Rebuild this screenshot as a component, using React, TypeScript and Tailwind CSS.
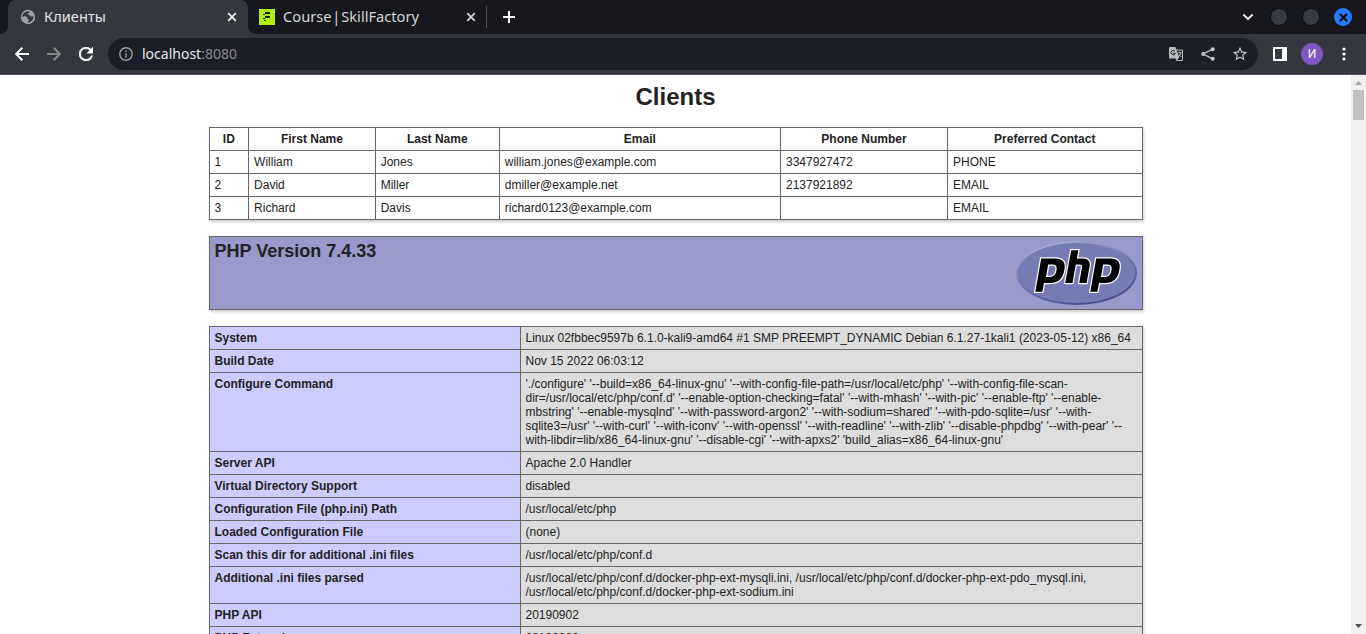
import React from "react";

const clients = [
  ["1", "William", "Jones", "william.jones@example.com", "3347927472", "PHONE"],
  ["2", "David", "Miller", "dmiller@example.net", "2137921892", "EMAIL"],
  ["3", "Richard", "Davis", "richard0123@example.com", "", "EMAIL"],
];

const columns = [
  { label: "ID", width: 39.6 },
  { label: "First Name", width: 126.6 },
  { label: "Last Name", width: 124.1 },
  { label: "Email", width: 281.2 },
  { label: "Phone Number", width: 167 },
  { label: "Preferred Contact", width: undefined },
];

const info = [
  ["System", "Linux 02fbbec9597b 6.1.0-kali9-amd64 #1 SMP PREEMPT_DYNAMIC Debian 6.1.27-1kali1 (2023-05-12) x86_64"],
  ["Build Date", "Nov 15 2022 06:03:12"],
  [
    "Configure Command",
    "'./configure' '--build=x86_64-linux-gnu' '--with-config-file-path=/usr/local/etc/php' '--with-config-file-scan-dir=/usr/local/etc/php/conf.d' '--enable-option-checking=fatal' '--with-mhash' '--with-pic' '--enable-ftp' '--enable-mbstring' '--enable-mysqlnd' '--with-password-argon2' '--with-sodium=shared' '--with-pdo-sqlite=/usr' '--with-sqlite3=/usr' '--with-curl' '--with-iconv' '--with-openssl' '--with-readline' '--with-zlib' '--disable-phpdbg' '--with-pear' '--with-libdir=lib/x86_64-linux-gnu' '--disable-cgi' '--with-apxs2' 'build_alias=x86_64-linux-gnu'",
  ],
  ["Server API", "Apache 2.0 Handler"],
  ["Virtual Directory Support", "disabled"],
  ["Configuration File (php.ini) Path", "/usr/local/etc/php"],
  ["Loaded Configuration File", "(none)"],
  ["Scan this dir for additional .ini files", "/usr/local/etc/php/conf.d"],
  [
    "Additional .ini files parsed",
    "/usr/local/etc/php/conf.d/docker-php-ext-mysqli.ini, /usr/local/etc/php/conf.d/docker-php-ext-pdo_mysql.ini, /usr/local/etc/php/conf.d/docker-php-ext-sodium.ini",
  ],
  ["PHP API", "20190902"],
  ["PHP Extension", "20190902"],
];

const cell = "border border-[#666] px-[5px] py-1 align-baseline text-xs leading-[14px]";
const tableBase = "w-[934px] border-collapse shadow-[1px_2px_3px_#ccc]";

function Cross({ className }: { className: string }) {
  return (
    <svg viewBox="0 0 10 10" className={className} fill="none" stroke="currentColor" strokeWidth="1.7">
      <path d="M1.2 1.2 8.8 8.8M8.8 1.2 1.2 8.8" />
    </svg>
  );
}

function TabStrip() {
  return (
    <div className="flex h-[34px] bg-[#16181d]">
      <div className="flex w-2 items-end bg-[#35373e]">
        <div className="h-[34px] w-2 rounded-br-lg bg-[#16181d]" />
      </div>
      <div className="flex w-60 items-center rounded-t-lg bg-[#35373e] pl-3 pr-[11px]">
        <svg viewBox="0 0 16 16" className="size-4 shrink-0">
          <circle cx="8" cy="8" r="7.2" fill="#9aa0a6" />
          <path
            d="M8 2.300c1 .2 1.600.6 1.500 1.300-.2.900-1.700.5-1.800 1.500-.1.800.9 1.100 1.800 1.100 1.200 0 1.200 1.500 2.200 1.600.8.100 1.400-.3 2.100-.2-.1 1.700-.9 3.200-2.100 4.300-1.100.9-2.300 1.500-3.700 1.500-.3-1 .8-1.400.9-2.200.1-1-1.200-.8-1.300-1.800-.1-.9-.8-1.300-1.800-1.300H2.300C2.200 5.200 4.600 2.500 8 2.300z"
            fill="#35373e"
          />
          <path d="M2.300 8.100c1.200-.2 1.700-1.300 2.900-1.100 1 .2.500 1.500 1.800 1.600v1.500H4.700l-1.900-.6z" fill="#9aa0a6" />
        </svg>
        <span className="ml-2 flex-1 pb-0.5 text-[14.67px] leading-5 text-[#e3e5e8]">Клиенты</span>
        <Cross className="size-2.5 text-[#f1f1f1]" />
      </div>
      <div className="w-2 bg-[#35373e]">
        <div className="h-[34px] w-2 rounded-bl-lg bg-[#16181d]" />
      </div>
      <div className="flex w-[231px] items-center border-r border-[#4b4d52] [border-image:linear-gradient(transparent_7px,#4b4d52_7px,#4b4d52_27px,transparent_27px)_1] pl-[3px] pr-[10px]">
        <svg viewBox="0 0 16 16" className="size-4 shrink-0" shapeRendering="crispEdges">
          <path fill="#b5ee13" d="M0 0h16v16H0z" />
          <path fill="#17230a" d="M6 3h5v2H6zM4 5h2v1H4zM6 7h5v2H6zM4 9h2v1H4zM5 11h2v1H5z" />
        </svg>
        <span className="ml-2 flex-1 whitespace-nowrap pb-0.5 text-[14.67px] leading-5 text-[#d5d6d8] [word-spacing:-3px]">Course | SkillFactory</span>
        <Cross className="size-2.5 text-[#d5d6d8]" />
      </div>
      <div className="flex flex-1 items-center pl-4">
        <svg viewBox="0 0 12 12" className="size-3" shapeRendering="crispEdges">
          <path d="M5 0h2v5h5v2H7v5H5V7H0V5h5z" fill="#fff" />
        </svg>
      </div>
      <div className="flex items-center pr-[14px]">
        <svg viewBox="0 0 12 8" className="h-2 w-3" fill="none" stroke="#fff" strokeWidth="1.8">
          <path d="M1.300 1.500 6 6l4.700-4.500" />
        </svg>
        <span className="ml-[17px] size-4 rounded-full bg-[#373943] shadow-[0_0_0_1px_#0e0f13]" />
        <span className="ml-4 size-4 rounded-full bg-[#373943] shadow-[0_0_0_1px_#0e0f13]" />
        <span className="ml-[15px] flex size-[18px] items-center justify-center rounded-full bg-[#267bff]">
          <svg viewBox="0 0 10 10" className="size-[9px]" stroke="#0e1420" strokeWidth="2.600">
            <path d="M1 1l8 8M9 1 1 9" />
          </svg>
        </span>
      </div>
    </div>
  );
}

function Toolbar() {
  return (
    <div className="flex h-[41px] items-center border-b border-[#55575c] bg-[#35373e] pl-[15px]">
      <svg viewBox="0 0 14 14" className="size-[14px]" fill="none" stroke="#fff" strokeWidth="2">
        <path d="M14 7H1.800M7.300.7 1.200 7l6.100 6.300" />
      </svg>
      <svg viewBox="0 0 14 14" className="ml-[18px] size-[14px]" fill="none" stroke="#84868a" strokeWidth="2">
        <path d="M0 7h12.200M6.700.7 12.800 7l-6.100 6.300" />
      </svg>
      <svg viewBox="4 4 16 16" className="ml-[18px] size-[14px]" fill="#fff" stroke="#fff" strokeWidth="0.500">
        <path d="M17.650 6.350A7.950 7.950 0 0 0 12 4a8 8 0 1 0 7.730 10h-2.080A6 6 0 1 1 12 6c1.660 0 3.140.69 4.220 1.780L13 11h7V4z" />
      </svg>
      <div className="ml-[15px] flex h-8 w-[1150px] items-center rounded-full bg-[#1b1e26] pl-[11px] pr-[10px]">
        <svg viewBox="0 0 14 14" className="size-[14px]">
          <circle cx="7" cy="7" r="6.200" fill="none" stroke="#9aa0a6" strokeWidth="1.400" />
          <path d="M6.300 6.200h1.500V10.500H6.300zM6.300 3.500h1.500V5H6.300z" fill="#9aa0a6" />
        </svg>
        <span className="ml-[9px] flex-1 text-[14px] leading-5 text-[#e8eaed]">
          localhost<span className="text-[#85878c]">:8080</span>
        </span>
        <svg viewBox="0 0 16 16" className="size-4">
          <path d="M2.500 1h5l.8 2.500H14a1 1 0 0 1 1 1V14a1 1 0 0 1-1 1H8.500l-.9-2.500H2a1 1 0 0 1-1-1V2a1 1 0 0 1 1-1z" fill="#b9babd" />
          <path d="M8.700 4.500H14v9.500H9.200l2-2.500z" fill="#1b1e26" />
          <path d="M9.700 6.700h4M11.700 5.500v1.200M13 7c-.4 1.700-1.400 2.700-2.600 3.700M10.700 8.300l2.600 2.700" stroke="#b9babd" fill="none" />
          <path d="M7 5.300a2.200 2.200 0 1 0 .3 2H5.200" stroke="#1b1e26" fill="none" />
        </svg>
        <svg viewBox="0 0 16 16" className="ml-4 size-4" fill="#c4c5c8">
          <path d="M12.700 3.200 3.200 8l9.500 4.800" fill="none" stroke="#c4c5c8" strokeWidth="1.300" />
          <circle cx="12.700" cy="3.200" r="2" />
          <circle cx="3.200" cy="8" r="2" />
          <circle cx="12.700" cy="12.800" r="2" />
        </svg>
        <svg viewBox="1 1 22 22" className="ml-4 size-4" fill="#c4c5c8">
          <path d="m22 9.240-7.190-.62L12 2 9.190 8.630 2 9.240l5.460 4.730L5.820 21 12 17.270 18.180 21l-1.630-7.030zM12 15.400l-3.760 2.270 1-4.280-3.320-2.880 4.380-.38L12 6.100l1.710 4.040 4.380.38-3.320 2.880 1 4.280z" />
        </svg>
      </div>
      <svg viewBox="0 0 14 14" className="ml-[15px] size-[14px]" shapeRendering="crispEdges">
        <path d="M0 0h14v14H0zM2 2v10h7V2z" fill="#fff" fillRule="evenodd" />
      </svg>
      <span className="ml-[14px] flex size-[22px] items-center justify-center rounded-full bg-[#7e57c2] font-['Roboto',sans-serif] text-[12px] leading-none text-white">И</span>
      <svg viewBox="0 0 4 14" className="ml-[19px] h-[14px] w-1" fill="#fff">
        <circle cx="2" cy="2" r="1.600" />
        <circle cx="2" cy="7" r="1.600" />
        <circle cx="2" cy="12" r="1.600" />
      </svg>
    </div>
  );
}

function PhpLogo() {
  return (
    <svg viewBox="0 0 121 64" className="h-16 w-[121px] shrink-0">
      <defs>
        <linearGradient id="rim" x1="0.200" y1="0" x2="0.700" y2="1">
          <stop offset="0" stopColor="#b0b2dc" />
          <stop offset="0.450" stopColor="#777bb3" />
          <stop offset="1" stopColor="#484893" />
        </linearGradient>
      </defs>
      <ellipse cx="60.500" cy="32" rx="60.500" ry="32" fill="url(#rim)" />
      <ellipse cx="60.500" cy="32" rx="58.500" ry="30" fill="#777bb3" />
      <g fill="#000" stroke="#fff" strokeWidth="2.400" strokeLinejoin="miter" paintOrder="stroke" fillRule="evenodd">
        <path d="M25.200 17.500H39.500Q50 17.500 48.600 27.500 46.800 42 34.500 42H28L26.400 50.800H19.300zM32.200 23.500 30 36H34Q39.300 36 40.500 29.500 41.500 23.500 36.800 23.500z" />
        <path d="M55.200 9.300H62.400L60.900 17.500H66.500Q75 17.500 73.600 25.300L70.600 42H63.200L66 26.300Q66.500 23.500 63.200 23.500H59.800L56.500 42H49.200z" />
        <path d="M80.200 17.500H94.500Q105 17.500 103.600 27.500 101.800 42 89.500 42H83L81.400 50.800H74.300zM87.200 23.500 85 36H89Q94.300 36 95.500 29.500 96.500 23.500 91.800 23.500z" />
      </g>
    </svg>
  );
}

function Scrollbar() {
  return (
    <div className="flex w-[15px] shrink-0 flex-col items-center bg-[#f1f1f1]">
      <svg viewBox="0 0 15 15" className="size-[15px]">
        <path d="M4 10h7L7.500 6z" fill="#a3a3a3" />
      </svg>
      <div className="h-[30px] w-[11px] bg-[#c1c1c1]" />
      <div className="flex-1" />
      <svg viewBox="0 0 15 15" className="size-[15px]">
        <path d="M4 5h7L7.500 9z" fill="#505050" />
      </svg>
    </div>
  );
}

export default function App() {
  return (
    <div className="flex h-[634px] w-[1366px] flex-col overflow-hidden bg-white">
      <header className="shrink-0 font-['Noto_Sans',sans-serif]">
        <TabStrip />
        <Toolbar />
      </header>
      <div className="flex min-h-0 flex-1">
        <main className="flex flex-1 flex-col items-center overflow-hidden font-['Liberation_Sans',sans-serif] text-[#222]">
          <h1 className="mt-2 mb-4 text-2xl leading-7 font-bold">Clients</h1>
          <table className={`${tableBase} table-fixed`}>
            <colgroup>
              {columns.map((c) => <col key={c.label} style={{ width: c.width }} />)}
            </colgroup>
            <thead>
              <tr>{columns.map((c) => <th key={c.label} className={cell}>{c.label}</th>)}</tr>
            </thead>
            <tbody>
              {clients.map((row) => (
                <tr key={row[0]}>
                  {row.map((v, i) => <td key={i} className={cell}>{v}</td>)}
                </tr>
              ))}
            </tbody>
          </table>
          <section className="mt-4 flex h-[74px] w-[934px] shrink-0 items-start justify-between border border-[#666] bg-[#9999cc] px-[5px] py-1 shadow-[1px_2px_3px_#ccc]">
            <h2 className="text-lg leading-5 font-bold">PHP Version 7.4.33</h2>
            <PhpLogo />
          </section>
          <table className={`${tableBase} mt-4`}>
            <tbody>
              {info.map(([k, v]) => (
                <tr key={k}>
                  <td className={`${cell} w-[311px] bg-[#ccccff] font-bold`}>{k}</td>
                  <td className={`${cell} bg-[#dddddd]`}>{v}</td>
                </tr>
              ))}
            </tbody>
          </table>
        </main>
        <Scrollbar />
      </div>
    </div>
  );
}
